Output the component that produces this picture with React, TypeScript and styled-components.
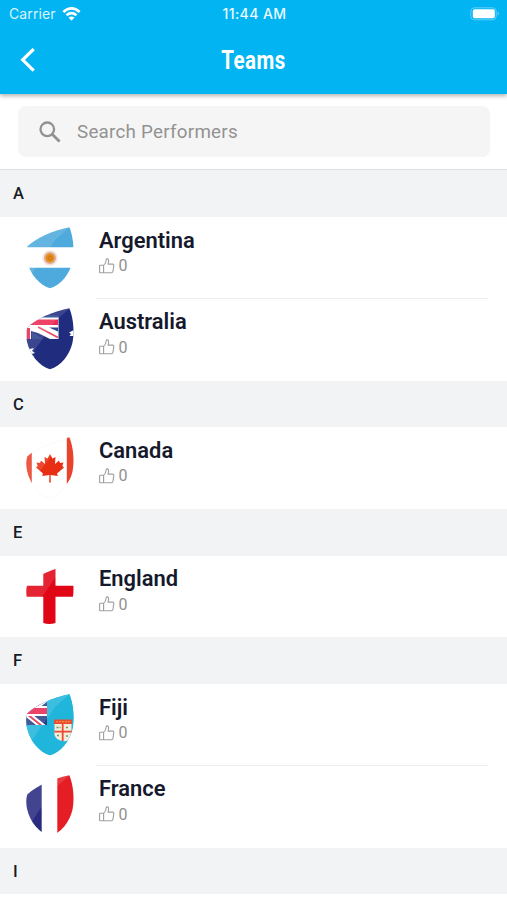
import React from "react";
import styled, { createGlobalStyle } from "styled-components";

const GlobalStyle = createGlobalStyle`
  * { box-sizing: border-box; }
  body { margin: 0; background: #fff; font-family: Roboto, sans-serif; overflow: hidden; }
  svg { display: block; }
`;

const Screen = styled.main`
  width: 507px;
  height: 900px;
  overflow: hidden;
  background: #fff;
`;

const Header = styled.header`
  position: relative;
  height: 94px;
  background: #03b4f3;
  color: #fff;
  box-shadow: 0 2px 4px rgba(0, 0, 0, 0.3);
`;

const StatusBar = styled.div`
  display: grid;
  grid-template-columns: 1fr auto 1fr;
  align-items: center;
  height: 27px;
  padding: 0 7px 0 9px;
  font-family: Inter, sans-serif;
  font-size: 14px;
  line-height: 27px;
`;

const Carrier = styled.div`
  display: flex;
  align-items: center;
  gap: 6px;
  color: #d9f4ff;
  letter-spacing: 0.1px;
`;

const Clock = styled.div`
  font-size: 14px;
  font-weight: 500;
  letter-spacing: 0.4px;
  color: #e9f9ff;
`;

const Battery = styled.div`
  display: flex;
  justify-content: flex-end;
`;

const NavBar = styled.nav`
  display: grid;
  grid-template-columns: 60px 1fr 60px;
  align-items: center;
  height: 67px;
`;

const BackButton = styled.button`
  display: flex;
  width: 40px;
  height: 40px;
  margin-left: 8px;
  padding: 7px 0 0 12px;
  border: 0;
  background: none;
`;

const Title = styled.h1`
  margin: 0;
  font-size: 25px;
  line-height: 30px;
  font-weight: 700;
  letter-spacing: 0.6px;
  text-align: center;
  transform: scaleX(0.82);
`;

const SearchArea = styled.div`
  height: 76.4px;
  padding: 12px 17px 0 18px;
  border-bottom: 1.4px solid #dedfdf;
`;

const SearchBox = styled.label`
  display: flex;
  align-items: center;
  height: 51px;
  padding-left: 21px;
  gap: 16px;
  border-radius: 8px;
  background: #f5f5f5;
`;

const SearchInput = styled.input`
  flex: 1;
  min-width: 0;
  padding: 0;
  border: 0;
  outline: 0;
  background: none;
  font: 400 18.8px/24px Roboto, sans-serif;
  letter-spacing: 0.25px;
  color: #333;
  &::placeholder { color: #929292; opacity: 1; }
`;

const Letter = styled.h2`
  height: 46.6px;
  margin: 0;
  padding-left: 13px;
  background: #f1f3f5;
  color: #171b26;
  font-size: 16.5px;
  line-height: 47px;
  font-weight: 500;
`;

const Row = styled.article`
  display: flex;
  height: 81.8px;
  padding: 0 19px 0 26px;
`;

const Flag = styled.div`
  width: 70px;
  padding-top: 9.7px;
`;

const Info = styled.div<{ $divided: boolean }>`
  flex: 1;
  padding: 10.7px 0 0 3px;
  border-bottom: 1px solid ${(p) => (p.$divided ? "#ebeced" : "transparent")};
`;

const Name = styled.h3`
  margin: 0;
  color: #15192b;
  font-size: 21.9px;
  line-height: 26px;
  font-weight: 600;
`;

const Likes = styled.div`
  display: flex;
  align-items: center;
  gap: 3.5px;
  height: 24px;
  color: #909090;
  font-size: 16px;
`;

const shield =
  "M43.3 .3C26 4.2 12 10 1.3 19.5C-.2 24 .2 29.5 1.1 34C4 47 13 58 24 61.2C35 58 43.5 47 46.4 35C48.7 24 47.2 9 43.3 .3Z";

function UnionJack() {
  return (
    <g>
      <path fill="#2b4187" d="M0 0H32V30H0Z" />
      <path stroke="#fff" strokeWidth="6" d="M-8 0L32 32M32 0L-8 30" />
      <path stroke="#e13251" strokeWidth="2" d="M-8 0L32 32M32 0L-8 30" />
      <path stroke="#fff" strokeWidth="10" d="M0 13H32" />
      <path stroke="#e92854" strokeWidth="6" d="M0 13H32" />
    </g>
  );
}

const flags: Record<string, React.ReactNode> = {
  Argentina: (
    <>
      <path fill="#4eaadd" d="M0 0H48V20.2H0ZM0 40.8H48V62H0Z" />
      <circle cx="24" cy="31" r="7.8" fill="#f6e4dc" />
      <circle cx="24" cy="31" r="6" fill="#dbab92" />
      <circle cx="24" cy="31" r="4.3" fill="#e98a12" />
      <circle cx="24" cy="31" r="1.8" fill="none" stroke="#bb7225" strokeWidth=".8" />
    </>
  ),
  Australia: (
    <>
      <path fill="#202d7f" d="M0 0H48V62H0Z" />
      <path fill="#fff" d="M0 9H32.5V31H24L12 25L5 23V31H0Z" />
      <path fill="#ec2853" d="M0 11.6H32V17H0ZM1 20H4V31H1Z" />
      <path fill="#2b438f" d="M15 7H32V9.5H9ZM23 19.5H32V23.5ZM6 24L17 31H6Z" />
      <path stroke="#e64a65" strokeWidth="1.8" d="M12 19L32 29.5" />
      <path fill="#fff" d="M0 38L4 41L8 40L6 43L9 45L5.5 46L8.5 49L3 48.5L0 46ZM48 22L43 24.5L45 26L43.5 28L48 28Z" />
    </>
  ),
  Canada: (
    <>
      <path fill="#e9432d" d="M0 0H5.8V47Q3 42 0 37ZM40.8 0H48V36L40.8 47Z" />
      <path fill="#e92f13" d="M24 17L26.5 21.5L29.5 20L29 27L33 23.5L34 26L37.5 25.5L36.3 29L38 30.5L31 36.5L31.8 39L24.6 38L24.8 45.5H23.2L23.4 38L16.2 39L17 36.5L10 30.5L11.7 29L10.5 25.5L14 26L15 23.5L19 27L18.5 20L21.5 21.5Z" />
    </>
  ),
  England: <path fill="#e10616" d="M17.3 0H29.5V20.8H48V31.8H29.5V58Q23 60 17.3 58V31.8H0V20.8H17.3Z" />,
  Fiji: (
    <>
      <path fill="#20b6dc" d="M0 0H48V62H0Z" />
      <g transform="translate(-11 4)"><UnionJack /></g>
      <path fill="#20b6dc" d="M21 0H48V62H0V31H21Z" />
      <path fill="#f5eddc" d="M28.5 26H45.5V43Q42 48 36.5 47Q30 46 28.5 41Z" />
      <path fill="#e94b35" d="M28 25.5H46V30H28ZM35.8 30H37.6V47H35.8ZM28.5 36.8H46V38.4H28.5Z" />
      <path fill="none" stroke="#e5a72b" strokeWidth="1.1" strokeDasharray="2 1" d="M30 27.7H44" />
      <path stroke="#6e9c5a" strokeWidth="1.5" strokeDasharray="2 1" d="M30.5 33.5H34.5M40 33.5H43M31 41.5H34M40 42H43" />
    </>
  ),
  France: (
    <>
      <path fill="#292b80" d="M0 0H15.7V62H0Z" />
      <path fill="#e51e25" d="M31.3 0H48V62H31.3Z" />
    </>
  ),
};

function FlagIcon({ name }: { name: string }) {
  return (
    <svg width="48" height="62" viewBox="0 0 48 62" fill="none" role="img" aria-label={name}>
      <defs>
        <clipPath id={`shield-${name}`}><path d={shield} /></clipPath>
      </defs>
      <g clipPath={`url(#shield-${name})`}>
        {flags[name]}
        <path fill="#fff" fillOpacity=".12" d="M0 0H44L29 13C22 24 12 36 5 48L0 40Z" />
      </g>
      {name === "Canada" && (
        <path stroke="#efefef" strokeWidth=".4" d="M6 16Q22 6 40 2M7 48Q24 74 40 48" />
      )}
    </svg>
  );
}

function ThumbIcon() {
  return (
    <svg width="16" height="16" viewBox="0 0 16 16" fill="none" stroke="#a0a0a0" strokeWidth="1.1" strokeLinejoin="round">
      <path d="M.7 7.2H4.6V14.7H1.2Q.6 14.7 .6 14V7.8Q.6 7.2 1.2 7.2M4.6 7.4Q7 5.5 7.2 1.8C7.4 .5 9.4 .6 9.6 2.2Q9.8 4 9 6.1H13.6Q15 6.3 14.8 7.6L14 13.2Q13.7 14.6 12.4 14.7H4.6" />
    </svg>
  );
}

const sections = [
  { letter: "A", teams: ["Argentina", "Australia"] },
  { letter: "C", teams: ["Canada"] },
  { letter: "E", teams: ["England"] },
  { letter: "F", teams: ["Fiji", "France"] },
  { letter: "I", teams: [] },
];

export default function App() {
  return (
    <Screen>
      <GlobalStyle />
      <Header>
        <StatusBar>
          <Carrier>
            Carrier
            <svg width="19" height="14" viewBox="0 0 18 14" fill="none" stroke="#fff" strokeWidth="2.6">
              <path d="M.8 5Q9-2.2 17.2 5M4 8.2Q9 4 14 8.2" />
              <path fill="#fff" stroke="none" d="M6 10.6Q9 8.2 12 10.6L9 13.8Z" />
            </svg>
          </Carrier>
          <Clock>11:44 AM</Clock>
          <Battery>
            <svg width="30" height="14" viewBox="0 0 30 14" fill="none">
              <rect x=".8" y=".8" width="25.4" height="12" rx="3.5" stroke="#62cff7" />
              <rect x="2.8" y="2.2" width="22" height="9" rx="1.8" fill="#fff" />
              <path d="M27.7 4.6Q30 6.5 27.7 8.8Z" fill="#7bd6f8" />
            </svg>
          </Battery>
        </StatusBar>
        <NavBar>
          <BackButton aria-label="Back">
            <svg width="16" height="24" viewBox="0 0 16 24" fill="none" stroke="#fff" strokeWidth="3.2">
              <path d="M13.7 1L2.7 11.8L13.7 22.6" />
            </svg>
          </BackButton>
          <Title>Teams</Title>
        </NavBar>
      </Header>
      <SearchArea>
        <SearchBox>
          <svg width="22" height="22" viewBox="0 0 22 22" fill="none" stroke="#929292" strokeWidth="2.3">
            <circle cx="8.3" cy="8.3" r="6.8" />
            <path strokeWidth="2.8" d="M13.2 13.2L20.6 20.6" />
          </svg>
          <SearchInput placeholder="Search Performers" aria-label="Search Performers" />
        </SearchBox>
      </SearchArea>
      {sections.map(({ letter, teams }) => (
        <section key={letter}>
          <Letter>{letter}</Letter>
          {teams.map((team, i) => (
            <Row key={team}>
              <Flag><FlagIcon name={team} /></Flag>
              <Info $divided={i < teams.length - 1}>
                <Name>{team}</Name>
                <Likes><ThumbIcon /><span>0</span></Likes>
              </Info>
            </Row>
          ))}
        </section>
      ))}
    </Screen>
  );
}
